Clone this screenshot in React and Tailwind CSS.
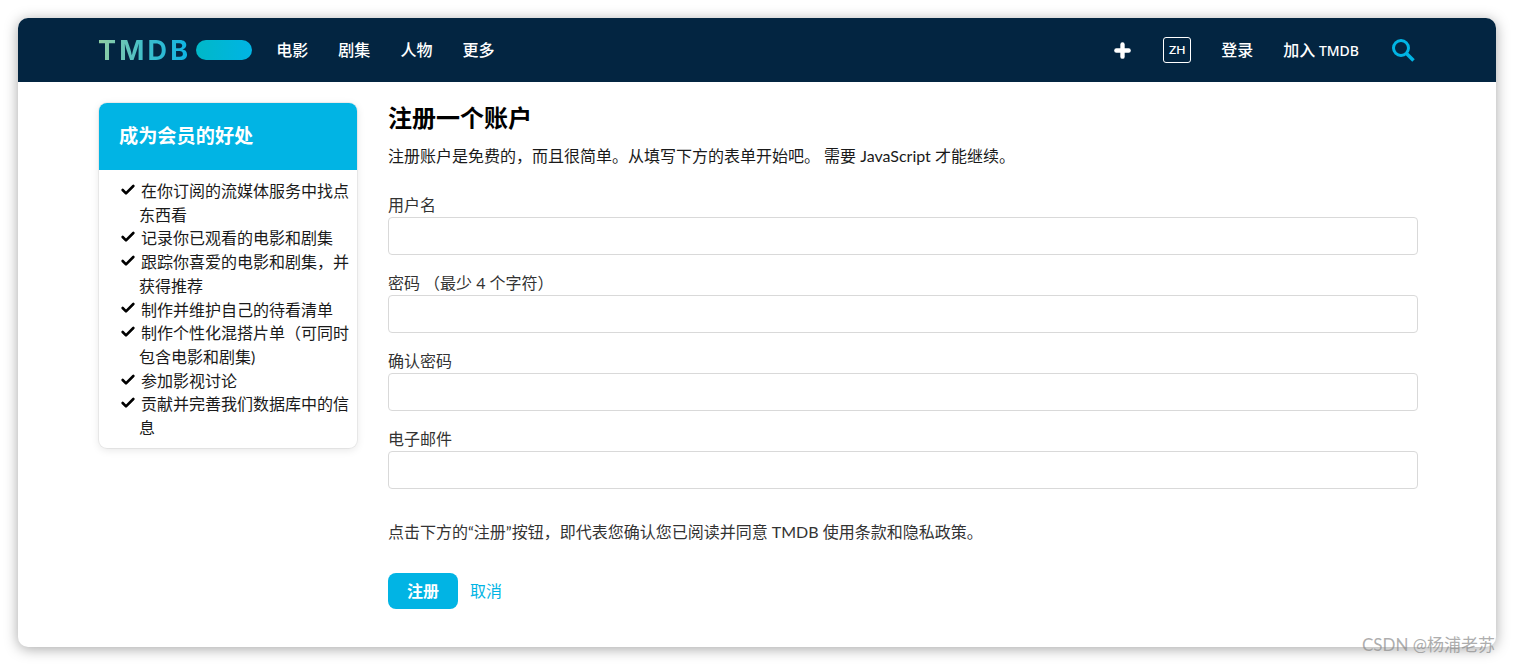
import { Check, Plus } from 'lucide-react';

const navLinks = ['电影', '剧集', '人物', '更多'];

const perks = [
  '在你订阅的流媒体服务中找点东西看',
  '记录你已观看的电影和剧集',
  '跟踪你喜爱的电影和剧集，并获得推荐',
  '制作并维护自己的待看清单',
  '制作个性化混搭片单（可同时包含电影和剧集)',
  '参加影视讨论',
  '贡献并完善我们数据库中的信息',
];

const fields = ['用户名', '密码 （最少 4 个字符）', '确认密码', '电子邮件'];

function Logo() {
  return (
    <div className="flex items-center gap-[5px]">
      <span className="bg-gradient-to-r from-[#90cea1] via-[#3cbec9] to-[#00b3e5] bg-clip-text font-['Inter','Noto_Sans',sans-serif] text-[27px] leading-none font-bold tracking-[3.2px] text-transparent">
        TMDB
      </span>
      <span className="h-5 w-14 rounded-full bg-gradient-to-r from-[#00b8c8] to-[#01b4e4]" />
    </div>
  );
}

function Header() {
  return (
    <header className="flex h-16 shrink-0 items-center justify-between bg-[#032541] pr-[81px] pl-20 text-white">
      <div className="flex items-center gap-[24px]">
        <Logo />
        <nav className="flex gap-[30px] text-base font-medium">
          {navLinks.map((link) => (
            <a key={link}>{link}</a>
          ))}
        </nav>
      </div>
      <div className="flex items-center text-base font-medium">
        <Plus className="h-[21px] w-[21px]" strokeWidth={5} />
        <span className="mr-[30px] ml-[30px] flex h-[26px] w-[28px] items-center justify-center rounded-[3px] border border-white text-xs font-semibold">
          ZH
        </span>
        <a>登录</a>
        <a className="mr-[32px] ml-[30px] font-['Noto_Sans','Noto_Sans_CJK_SC',sans-serif] text-[14px]">
          <span className="text-base">加入</span> TMDB
        </a>
        <svg viewBox="0 0 24 24" className="h-[24px] w-[24px] text-[#01b4e4]" fill="none" stroke="currentColor">
          <circle cx="10" cy="10" r="7.5" strokeWidth="3" />
          <path d="M15.5 15.5 L22.5 22.5" strokeWidth="3.6" />
        </svg>
      </div>
    </header>
  );
}

function Sidebar() {
  return (
    <aside className="h-fit w-[258px] shrink-0 overflow-hidden rounded-lg bg-white shadow-[0_2px_8px_rgba(0,0,0,0.1)] ring-1 ring-black/5">
      <h3 className="flex h-[67px] items-center bg-[#01b4e4] pb-px pl-5 text-[19.2px] font-semibold text-white">成为会员的好处</h3>
      <ul className="pt-[9px] pr-[6px] pb-[8px] pl-10 text-base leading-[23.7px] text-[#1a1a1a]">
        {perks.map((perk) => (
          <li key={perk}>
            <Check className="mr-[5px] -ml-[19px] inline-block h-[16px] w-[16px] -translate-y-[3px] text-black" strokeWidth={4} />
            {perk}
          </li>
        ))}
      </ul>
    </aside>
  );
}

function SignupForm() {
  return (
    <section className="w-[1030px]">
      <h2 className="text-2xl leading-[30px] font-semibold text-black">注册一个账户</h2>
      <p className="mt-[11px] text-base leading-6 text-[#1a1a1a]">
        注册账户是免费的，而且很简单。从填写下方的表单开始吧。 需要 JavaScript 才能继续。
      </p>
      <form className="mt-[25px]">
        <div className="flex flex-col gap-[16px]">
          {fields.map((field) => (
            <label key={field} className="block text-base leading-6 text-[#333]">
              {field}
              <input className="block h-[38px] w-full rounded border border-[#d9d9d9] bg-white" />
            </label>
          ))}
        </div>
        <p className="mt-[31px] text-base leading-6 text-[#333]">
          点击下方的“注册”按钮，即代表您确认您已阅读并同意 TMDB 使用条款和隐私政策。
        </p>
        <div className="mt-[29px] flex items-center gap-[12px]">
          <button type="button" className="h-9 w-[70px] rounded-lg bg-[#01b4e4] text-base font-semibold text-white">
            注册
          </button>
          <a className="text-base text-[#01b4e4]">取消</a>
        </div>
      </form>
    </section>
  );
}

export default function App() {
  return (
    <div className="relative h-[665px] overflow-hidden bg-white p-[18px] font-['Lato','Noto_Sans_CJK_SC',sans-serif]">
      <div className="flex h-[629px] flex-col overflow-hidden rounded-[10px] bg-white shadow-[0_2px_14px_rgba(0,0,0,0.35)]">
        <Header />
        <main className="flex gap-[31px] pt-[21px] pl-[81px]">
          <Sidebar />
          <SignupForm />
        </main>
      </div>
      <span className="absolute top-[635px] left-[1362px] text-[17px] leading-5 whitespace-nowrap text-[#8a8a8a]/70">
        CSDN @杨浦老苏
      </span>
    </div>
  );
}
